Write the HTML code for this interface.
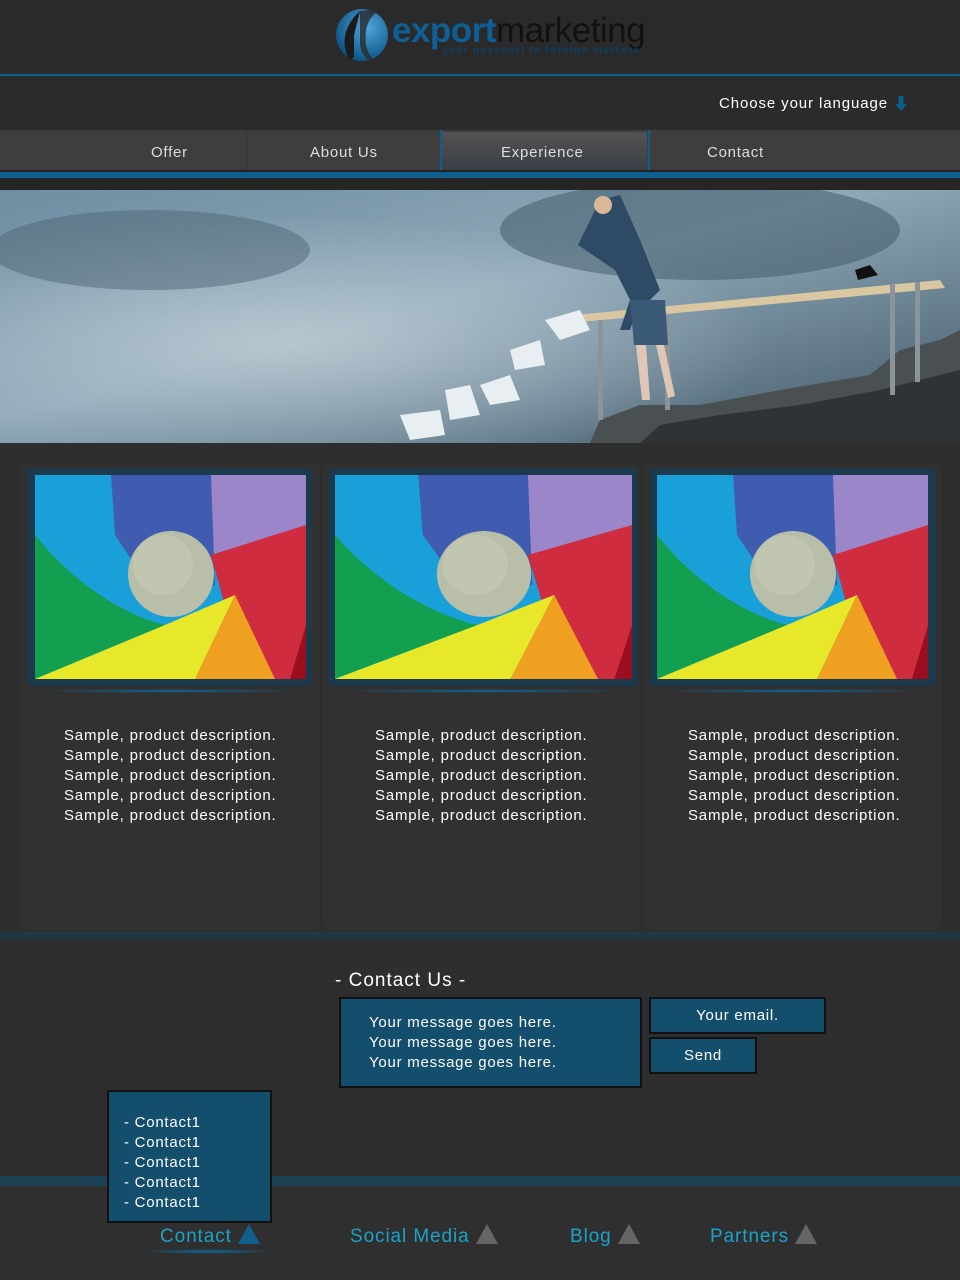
<!DOCTYPE html>
<html><head><meta charset="utf-8"><style>
*{margin:0;padding:0;box-sizing:border-box}
body{width:960px;height:1280px;background:#2e2e2e;font-family:"Liberation Sans",sans-serif;position:relative;overflow:hidden;letter-spacing:0.75px}
.abs{position:absolute}
.card{position:absolute;top:464px;height:466px;background:#313131;border-radius:6px}
.frame{position:absolute;top:468px;height:218px;background:#1c3a4c;border-radius:5px}
.img{position:absolute;top:475px;width:271px;height:204px;overflow:hidden}
.desc{position:absolute;top:726px;color:#fff;font-size:15px;line-height:20px;letter-spacing:0.8px}
.glow{position:absolute;top:689px;height:4px;background:radial-gradient(ellipse at center,#0d6a9a 0%,rgba(13,106,154,0) 70%)}
.nav{position:absolute;top:144px;color:#ddd;font-size:15px}
.fl{position:absolute;top:1224px;color:#1aa3c9;font-size:19px;letter-spacing:0.9px}
.tri{display:inline-block;width:0;height:0;border-left:11px solid transparent;border-right:11px solid transparent;border-bottom:20px solid #666;vertical-align:-2px;margin-left:6px}
</style></head><body>
<div class="abs" style="left:0;top:0;width:960px;height:75px;background:#2a2a2a"></div>
<div class="abs" style="left:0;top:74px;width:960px;height:2px;background:#0e5f8e"></div>
<div class="abs" style="left:0;top:76px;width:960px;height:54px;background:#2b2b2b"></div>
<svg class="abs" style="left:330px;top:5px" width="62" height="62" viewBox="0 0 62 62">
<defs><radialGradient id="g" cx="0.6" cy="0.35" r="0.7"><stop offset="0" stop-color="#4fa6dc"/><stop offset="1" stop-color="#0a4f80"/></radialGradient></defs>
<circle cx="32" cy="30" r="26" fill="url(#g)"/>
<path d="M20 55 C10 40 14 20 30 6 L24 30 L24 52 Z" fill="#1b1b1b"/>
<path d="M30 6 C38 5 45 4 52 4 C40 10 34 20 36 40 C38 50 44 56 48 60 C40 58 32 52 30 40 Z" fill="#2a2a2a" opacity=".8"/>
</svg>
<div class="abs" style="left:392px;top:11px;font-size:35px;letter-spacing:-0.5px;line-height:40px"><span style="color:#0e5f95;font-weight:bold">export</span><span style="color:#111">marketing</span></div>
<div class="abs" style="left:442px;top:45px;font-size:10px;color:#0b3f66;font-weight:bold;letter-spacing:1.3px">your passport to foreign markets</div>
<div class="abs" style="left:719px;top:95px;color:#fff;font-size:15px;letter-spacing:0.9px">Choose your language</div>
<svg class="abs" style="left:895px;top:96px" width="12" height="16"><rect x="3.5" y="0" width="5" height="9" fill="#0e5f8e"/><path d="M0 8 L12 8 L6 15 Z" fill="#0e5f8e"/></svg>
<div class="abs" style="left:0;top:130px;width:960px;height:40px;background:#3e3e3e"></div>
<div class="abs" style="left:246px;top:130px;width:1px;height:40px;background:#333"></div>
<div class="abs" style="left:440px;top:130px;width:2px;height:40px;background:#0e5f8e"></div>
<div class="abs" style="left:442px;top:132px;width:205px;height:38px;background:linear-gradient(#525252,#3a3f47)"></div>
<div class="abs" style="left:648px;top:130px;width:2px;height:40px;background:#0e5f8e"></div>
<div class="nav" style="left:151px">Offer</div>
<div class="nav" style="left:310px">About Us</div>
<div class="nav" style="left:501px">Experience</div>
<div class="nav" style="left:707px">Contact</div>
<div class="abs" style="left:0;top:170px;width:960px;height:2px;background:#222"></div>
<div class="abs" style="left:0;top:172px;width:960px;height:6px;background:#0e5f8e"></div>
<div class="abs" style="left:0;top:178px;width:960px;height:12px;background:#252525"></div>
<svg class="abs" style="left:0;top:190px" width="960" height="253" viewBox="0 0 960 253">
<defs><linearGradient id="sky" x1="0" y1="0" x2="1" y2="1"><stop offset="0" stop-color="#6f8ea2"/><stop offset=".45" stop-color="#8ea8b8"/><stop offset="1" stop-color="#3f5666"/></linearGradient>
<radialGradient id="cl" cx=".3" cy=".6" r=".5"><stop offset="0" stop-color="#c8d4da" stop-opacity=".7"/><stop offset="1" stop-color="#c8d4da" stop-opacity="0"/></radialGradient></defs>
<rect width="960" height="253" fill="url(#sky)"/>
<rect width="960" height="253" fill="url(#cl)"/>
<ellipse cx="150" cy="60" rx="160" ry="40" fill="#4e6676" opacity=".5"/>
<ellipse cx="700" cy="40" rx="200" ry="50" fill="#3d5565" opacity=".5"/>
<path d="M590 253 L600 230 L640 215 L700 215 L780 200 L870 185 L900 160 L940 150 L960 140 L960 253 Z" fill="#4a4f52"/>
<path d="M640 253 L660 235 L720 225 L800 215 L880 200 L960 180 L960 253 Z" fill="#2f3335"/>
<path d="M575 125 L940 90 L945 98 L580 132 Z" fill="#d8c7a0"/>
<rect x="598" y="130" width="5" height="100" fill="#8a949a"/><rect x="665" y="125" width="5" height="95" fill="#8a949a"/>
<rect x="890" y="95" width="5" height="110" fill="#8a949a"/><rect x="915" y="92" width="5" height="100" fill="#8a949a"/>
<path d="M600 10 L620 5 L640 50 L660 100 L650 110 L640 110 L630 140 L620 140 L630 110 L615 80 L578 55 Z" fill="#2e4a64"/>
<path d="M630 110 L665 110 L668 155 L634 155 Z" fill="#3b5a78"/>
<path d="M636 155 L642 210 L650 210 L646 155 M656 155 L668 208 L675 206 L664 155" fill="#e0c6b6"/>
<circle cx="603" cy="15" r="9" fill="#d9b89a"/>
<path d="M855 80 L870 75 L878 85 L858 90 Z" fill="#111"/>
<path d="M545 130 L580 120 L590 140 L560 150 Z M510 160 L540 150 L545 175 L515 180 Z M480 195 L510 185 L520 210 L490 215 Z M445 200 L470 195 L480 225 L450 230 Z M400 225 L440 220 L445 245 L410 250 Z" fill="#e8eef2"/>
</svg>
<div class="card" style="left:20px;width:300px"></div>
<div class="card" style="left:322px;width:318px"></div>
<div class="card" style="left:645px;width:297px"></div>
<div class="frame" style="left:27px;width:285px"></div>
<div class="frame" style="left:328px;width:310px"></div>
<div class="frame" style="left:650px;width:286px"></div>
<div class="img" style="left:35px"><svg width="271" height="204" viewBox="0 0 271 204"><g id="pw">
<rect width="271" height="204" fill="#1aa0d8"/>
<path d="M176 0 L271 0 L271 60 L176 80 Z" fill="#9a86c8"/>
<path d="M76 0 L176 0 L180 110 L120 120 L80 60 Z" fill="#3f5cb0"/>
<path d="M0 60 C40 110 90 140 130 150 L0 204 Z" fill="#12a050"/>
<path d="M176 80 L271 50 L271 204 L210 204 Z" fill="#d02c40"/>
<path d="M0 204 L130 150 L200 120 L160 204 Z" fill="#e8e82a"/>
<path d="M160 204 L200 120 L240 204 Z" fill="#f0a020"/>
<path d="M255 204 L271 150 L271 204 Z" fill="#9a0e20"/>
<circle cx="136" cy="99" r="43" fill="#b8bea8"/><circle cx="128" cy="90" r="30" fill="#c6cbb6" opacity=".6"/>
</g></svg></div>
<div class="img" style="left:335px;width:297px"><svg width="297" height="204" viewBox="0 0 271 204" preserveAspectRatio="none"><use href="#pw"/></svg></div>
<div class="img" style="left:657px"><svg width="271" height="204"><use href="#pw"/></svg></div>
<div class="glow" style="left:35px;width:271px"></div>
<div class="glow" style="left:335px;width:297px"></div>
<div class="glow" style="left:657px;width:271px"></div>
<div class="desc" style="left:64px">Sample, product description.<br>Sample, product description.<br>Sample, product description.<br>Sample, product description.<br>Sample, product description.</div>
<div class="desc" style="left:375px">Sample, product description.<br>Sample, product description.<br>Sample, product description.<br>Sample, product description.<br>Sample, product description.</div>
<div class="desc" style="left:688px">Sample, product description.<br>Sample, product description.<br>Sample, product description.<br>Sample, product description.<br>Sample, product description.</div>
<div class="abs" style="left:0;top:932px;width:960px;height:7px;background:#203845"></div>
<div class="abs" style="left:335px;top:970px;color:#fff;font-size:19px;letter-spacing:1px">- Contact Us -</div>
<div class="abs" style="left:339px;top:997px;width:303px;height:91px;background:#134e6c;border:2px solid #111;color:#fff;font-size:15px;line-height:20px;padding:14px 0 0 28px">Your message goes here.<br>Your message goes here.<br>Your message goes here.</div>
<div class="abs" style="left:649px;top:997px;width:177px;height:37px;background:#134e6c;border:2px solid #111;color:#fff;font-size:15px;text-align:center;line-height:34px">Your email.</div>
<div class="abs" style="left:649px;top:1037px;width:108px;height:37px;background:#134e6c;border:2px solid #111;color:#fff;font-size:15px;text-align:center;line-height:34px">Send</div>
<div class="abs" style="left:0;top:1176px;width:960px;height:10px;background:#1e4055"></div>
<div class="abs" style="left:0;top:1186px;width:960px;height:94px;background:#2f2f2f"></div>
<div class="abs" style="left:107px;top:1090px;width:165px;height:133px;background:#134e6c;border:2px solid #111;color:#fff;font-size:15px;line-height:20px;padding:21px 0 0 15px">- Contact1<br>- Contact1<br>- Contact1<br>- Contact1<br>- Contact1</div>
<div class="fl" style="left:160px">Contact<span class="tri" style="border-bottom-color:#0e5f8e"></span></div>
<div class="abs" style="left:140px;top:1249px;width:135px;height:5px;background:radial-gradient(ellipse at center,#0e6a9c 0%,rgba(14,106,156,0) 70%)"></div>
<div class="fl" style="left:350px">Social Media<span class="tri"></span></div>
<div class="fl" style="left:570px">Blog<span class="tri"></span></div>
<div class="fl" style="left:710px">Partners<span class="tri"></span></div>
</body></html>
